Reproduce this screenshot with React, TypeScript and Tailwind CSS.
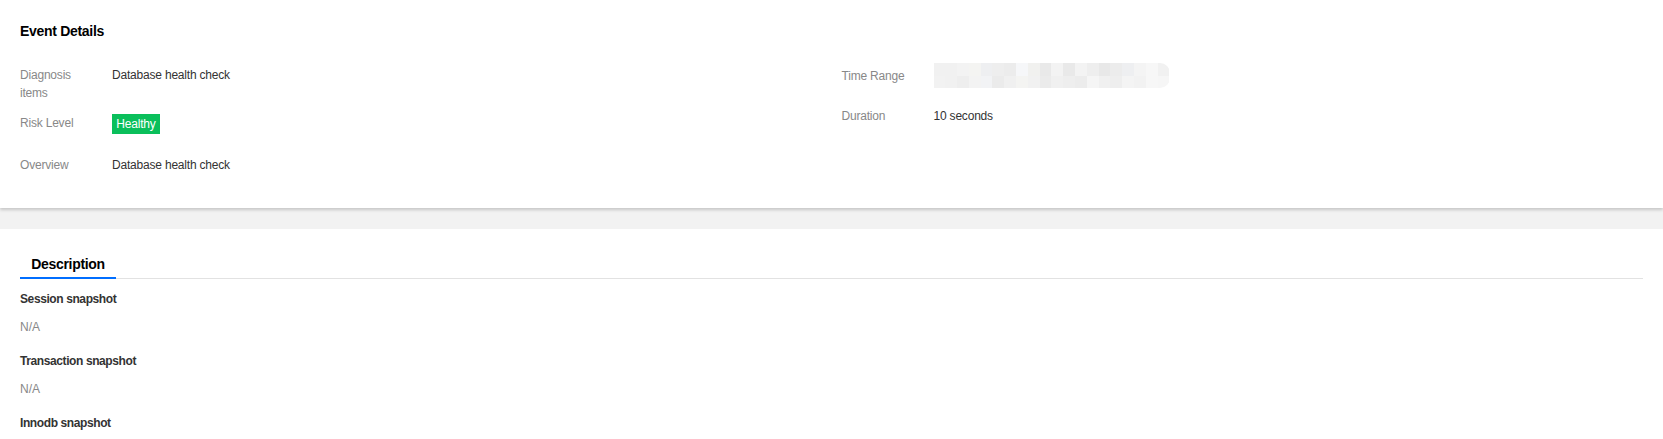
const blurTiles = [
  ["#f1f1f1", "#f1f1f1", "#f3f3f3", "#f4f4f2", "#eeeff1", "#eeeeee", "#ececec", "#f6f7f9", "#f1f1ef", "#e9e9e9", "#f3f3f3", "#e9e9e9", "#f3f3f3", "#eeeeee", "#e8e8e8", "#ececec", "#eeeff1", "#f4f4f4", "#f7f7f7", "#f1f1f1"],
  ["#f2f2f2", "#f1f1f1", "#eeeeee", "#f3f3f3", "#f2f3f5", "#ebebeb", "#f0f0f0", "#f4f4f2", "#f1f1f1", "#ebebeb", "#f0f0f0", "#eeeeee", "#ececec", "#f5f5f5", "#f0f0f0", "#eeeeee", "#f4f4f4", "#f2f2f2", "#f7f7f7", "#f6f6f6"],
];

const BlurredValue = () => (
  <div className="flex flex-col w-[236px] h-[25px] overflow-hidden rounded-r-[10px]">
    {blurTiles.map((row, r) => (
      <div key={r} className="flex flex-1">
        {row.map((c, i) => (
          <div key={i} className="flex-1" style={{ backgroundColor: c }} />
        ))}
      </div>
    ))}
  </div>
);

const Snapshot = ({ title, first }: { title: string; first?: boolean }) => (
  <div className={first ? "mt-[11px]" : "mt-4"}>
    <h3 className="text-xs font-bold leading-[18px] tracking-[-0.4px] text-[#333]">{title}</h3>
    <p className="mt-2.5 text-xs leading-[18px] text-[#888]">N/A</p>
  </div>
);

export default function App() {
  return (
    <div className="min-h-screen bg-white font-['Liberation_Sans',Arial,sans-serif]">
      {/* event card */}
      <div className="relative z-10 h-[208px] bg-white px-5 pt-[21px] shadow-[0_2px_3px_rgba(0,0,0,0.18)]">
        <h1 className="text-sm font-bold leading-5 tracking-[-0.3px] text-black">Event Details</h1>
        <div className="mt-[22px] grid grid-cols-2 gap-x-5 text-xs leading-[18px] tracking-[-0.2px]">
          <div className="flex flex-col">
            <div className="mt-[3px] flex">
              <span className="w-[92px] shrink-0 pr-3 text-[#888]">Diagnosis items</span>
              <span className="text-[#333]">Database health check</span>
            </div>
            <div className="mt-3 flex items-start">
              <span className="w-[92px] shrink-0 text-[#888]">Risk Level</span>
              <span className="flex h-5 w-12 items-center justify-center bg-[#0abf5b] text-xs text-white">Healthy</span>
            </div>
            <div className="mt-[22px] flex">
              <span className="w-[92px] shrink-0 text-[#888]">Overview</span>
              <span className="text-[#333]">Database health check</span>
            </div>
          </div>
          <div className="flex flex-col">
            <div className="flex items-center">
              <span className="w-[92px] shrink-0 text-[#888]">Time Range</span>
              <BlurredValue />
            </div>
            <div className="mt-[19px] flex">
              <span className="w-[92px] shrink-0 text-[#888]">Duration</span>
              <span className="text-[#333]">10 seconds</span>
            </div>
          </div>
        </div>
      </div>

      <div className="h-[21px] bg-[#f2f2f2]" />

      {/* description */}
      <div className="bg-white px-5 pt-[25px]">
        <div className="flex border-b border-[#e2e2e2]">
          <div className="-mb-px w-24 border-b-2 border-[#006eff] pb-[3px] text-center text-sm font-bold leading-5 tracking-[-0.3px] text-black">
            Description
          </div>
        </div>
        <Snapshot title="Session snapshot" first />
        <Snapshot title="Transaction snapshot" />
        <Snapshot title="Innodb snapshot" />
      </div>
    </div>
  );
}
